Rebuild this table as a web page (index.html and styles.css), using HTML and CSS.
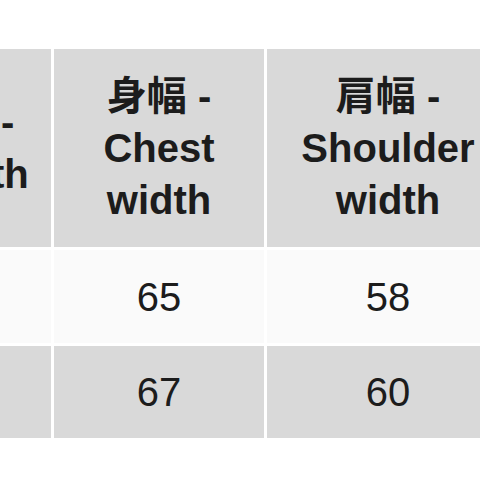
FILE: index.html
```html
<!DOCTYPE html>
<html lang="ja">
<head>
<meta charset="utf-8">
<title>Size table</title>
<link rel="stylesheet" href="styles.css">
</head>
<body>
<div class="viewport">
  <table class="size-table">
    <colgroup>
      <col class="c1">
      <col class="c2">
      <col class="c3">
    </colgroup>
    <thead>
      <tr>
        <th>着丈 - Length</th>
        <th>身幅 - Chest width</th>
        <th>肩幅 - Shoulder width</th>
      </tr>
    </thead>
    <tbody>
      <tr class="row-light">
        <td></td>
        <td>65</td>
        <td>58</td>
      </tr>
      <tr class="row-dark">
        <td></td>
        <td>67</td>
        <td>60</td>
      </tr>
    </tbody>
  </table>
</div>
</body>
</html>
```

FILE: styles.css
```css
html, body {
  margin: 0;
  padding: 0;
  background: #ffffff;
}

.viewport {
  width: 480px;
  height: 480px;
  overflow: hidden;
  background: #ffffff;
}

.size-table {
  margin-top: 46px;
  margin-left: -130px;
  border-collapse: separate;
  border-spacing: 3px;
  table-layout: fixed;
  width: 642px;
  font-family: "Liberation Sans", "Noto Sans CJK JP", Arial, sans-serif;
  color: #1c1c1c;
  text-align: center;
}

.c1 { width: 178px; }
.c2 { width: 210px; }
.c3 { width: 242px; }

.size-table th {
  background: #d9d9d9;
  font-weight: bold;
  font-size: 40px;
  line-height: 52px;
  height: 198px;
  padding: 0;
  vertical-align: middle;
}

.size-table td {
  font-size: 40px;
  line-height: 52px;
  padding: 0;
  vertical-align: middle;
  font-weight: normal;
}

.row-light td {
  background: #fafafa;
  height: 93px;
}

.row-dark td {
  background: #d9d9d9;
  height: 92px;
}
```
